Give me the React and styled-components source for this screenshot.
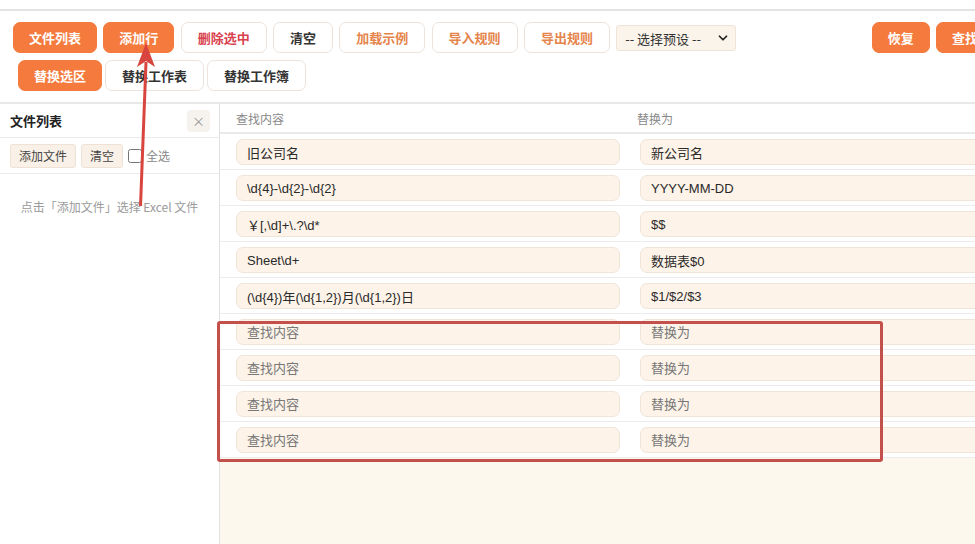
import styled, { createGlobalStyle } from "styled-components";
import { ChevronDown } from "lucide-react";

const GlobalStyle = createGlobalStyle`
  html, body {
    margin: 0;
    padding: 0;
    background: #fff;
    overflow: hidden;
    font-family: "Noto Sans CJK SC", "Noto Sans", sans-serif;
  }
`;

const Page = styled.div`
  position: relative;
  width: 1040px;
  height: 544px;
  display: flex;
  flex-direction: column;
  padding-top: 9px;
  box-sizing: border-box;
`;

const Toolbar = styled.div`
  border-top: 2px solid #e4e4e4;
  border-bottom: 2px solid #e8e8e8;
  padding: 11px 20px 11px 13px;
  display: flex;
  flex-direction: column;
  gap: 7px;
`;

const ToolRow = styled.div`
  display: flex;
  align-items: center;
  gap: 6.3px;
`;

const TabGroup = styled.div`
  display: flex;
  gap: 3px;
  margin-left: 5px;
`;

const Spacer = styled.div`
  flex: 1;
`;

const colors = {
  primary: "#fff",
  danger: "#d8434f",
  accent: "#e5854c",
  plain: "#333",
};

const Button = styled.button`
  height: 31px;
  padding: 0 ${(p) => (p.$kind === "primary" ? 15 : 16)}px;
  border-radius: 7px;
  font-family: "Noto Sans CJK SC", sans-serif;
  font-size: 13px;
  font-weight: 700;
  white-space: nowrap;
  cursor: pointer;
  border: 1px solid ${(p) => (p.$kind === "primary" ? "#f47b3d" : "#ece3dc")};
  background: ${(p) => (p.$kind === "primary" ? "#f47b3d" : "#fff")};
  color: ${(p) => colors[p.$kind || "plain"]};
`;

const SelectWrap = styled.div`
  position: relative;
  width: 120px;
  height: 26px;
`;

const Select = styled.select`
  appearance: none;
  width: 100%;
  height: 100%;
  border: 1px solid #efe4d6;
  border-radius: 3px;
  background: #fbf4ea;
  padding: 0 8px;
  font-family: "Noto Sans CJK SC", sans-serif;
  font-size: 13px;
  color: #333;
`;

const Chevron = styled(ChevronDown)`
  position: absolute;
  right: 6px;
  top: 6px;
  pointer-events: none;
`;

const Body = styled.div`
  flex: 1;
  display: flex;
  min-height: 0;
`;

const Sidebar = styled.aside`
  width: 219px;
  border-right: 1px solid #e2e2e2;
  display: flex;
  flex-direction: column;
`;

const SideHeader = styled.div`
  height: 33px;
  padding: 0 9px 0 10px;
  display: flex;
  align-items: center;
  justify-content: space-between;
  border-bottom: 1px solid #ebebeb;
  font-size: 13px;
  font-weight: 700;
  color: #222;
`;

const CloseBtn = styled.span`
  width: 23px;
  height: 22px;
  border-radius: 4px;
  background: #f6f2ee;
  color: #999;
  font-size: 13px;
  font-weight: 400;
  display: flex;
  align-items: center;
  justify-content: center;
`;

const SideTools = styled.div`
  height: 35px;
  padding: 0 10px;
  display: flex;
  align-items: center;
  gap: 5px;
  border-bottom: 1px solid #ebebeb;
  font-size: 12px;
  color: #888;
`;

const SmallButton = styled.button`
  height: 24px;
  padding: 0 8px;
  border: 1px solid #efe2d4;
  border-radius: 3px;
  background: #f9f1e7;
  font-family: "Noto Sans CJK SC", sans-serif;
  font-size: 12px;
  color: #444;
`;

const Check = styled.label`
  display: flex;
  align-items: center;
  gap: 4px;

  input {
    width: 14px;
    height: 14px;
    margin: 0;
  }
`;

const Empty = styled.p`
  margin: 24px 0 0;
  text-align: center;
  font-size: 12px;
  color: #9a9a9a;
`;

const Main = styled.main`
  flex: 1;
  background: #fdf8ee;
  display: flex;
  flex-direction: column;
`;

const Grid = styled.div`
  display: grid;
  grid-template-columns: 1fr 1fr;
  column-gap: 20px;
  padding: 0 16px;
  background: #fff;
`;

const HeadRow = styled(Grid)`
  height: 28px;
  align-items: center;
  border-bottom: 2px solid #eaeaea;
  font-size: 12px;
  color: #888;

  span + span {
    margin-left: -3px;
  }
`;

const Row = styled(Grid)`
  padding-top: 5px;
  padding-bottom: 4px;
  border-bottom: 1px solid #ececec;
`;

const Field = styled.input`
  height: 26px;
  box-sizing: border-box;
  width: 100%;
  border: 1px solid #efe4d8;
  border-radius: 7px;
  background: #fdf3e8;
  padding: 0 10px;
  font-family: "Liberation Sans", "Noto Sans CJK SC", sans-serif;
  font-size: 13px;
  color: #2a2a2a;

  &::placeholder {
    color: #777;
  }
`;

const Callout = styled.div`
  position: absolute;
  left: 217px;
  top: 321px;
  width: 666px;
  height: 141px;
  box-sizing: border-box;
  border: 3px solid #c4504b;
  border-radius: 3px;
  pointer-events: none;
`;

const Arrow = styled.svg`
  position: absolute;
  left: 0;
  top: 0;
  pointer-events: none;
`;

const rules = [
  ["旧公司名", "新公司名"],
  ["\\d{4}-\\d{2}-\\d{2}", "YYYY-MM-DD"],
  ["￥[,\\d]+\\.?\\d*", "$$"],
  ["Sheet\\d+", "数据表$0"],
  ["(\\d{4})年(\\d{1,2})月(\\d{1,2})日", "$1/$2/$3"],
  ["", ""],
  ["", ""],
  ["", ""],
  ["", ""],
];

export default function App() {
  return (
    <Page>
      <GlobalStyle />
      <Toolbar>
        <ToolRow>
          <Button $kind="primary">文件列表</Button>
          <Button $kind="primary">添加行</Button>
          <Button $kind="danger">删除选中</Button>
          <Button>清空</Button>
          <Button $kind="accent">加载示例</Button>
          <Button $kind="accent">导入规则</Button>
          <Button $kind="accent">导出规则</Button>
          <SelectWrap>
            <Select defaultValue="">
              <option value="">-- 选择预设 --</option>
            </Select>
            <Chevron size={14} strokeWidth={3} color="#222" />
          </SelectWrap>
          <Spacer />
          <Button $kind="primary">恢复</Button>
          <Button $kind="primary">查找替换</Button>
        </ToolRow>
        <ToolRow>
          <TabGroup>
            <Button $kind="primary">替换选区</Button>
            <Button>替换工作表</Button>
            <Button>替换工作簿</Button>
          </TabGroup>
        </ToolRow>
      </Toolbar>

      <Body>
        <Sidebar>
          <SideHeader>
            文件列表
            <CloseBtn>×</CloseBtn>
          </SideHeader>
          <SideTools>
            <SmallButton>添加文件</SmallButton>
            <SmallButton>清空</SmallButton>
            <Check>
              <input type="checkbox" />
              全选
            </Check>
          </SideTools>
          <Empty>点击「添加文件」选择 Excel 文件</Empty>
        </Sidebar>

        <Main>
          <HeadRow>
            <span>查找内容</span>
            <span>替换为</span>
          </HeadRow>
          {rules.map(([find, repl], i) => (
            <Row key={i}>
              <Field defaultValue={find} placeholder="查找内容" />
              <Field defaultValue={repl} placeholder="替换为" />
            </Row>
          ))}
        </Main>
      </Body>

      <Callout />
      <Arrow width="300" height="260" viewBox="0 0 300 260">
        <path d="M139 206 L144.5 62 L147.5 62 L142 206 Z" fill="#d8443e" />
        <path d="M146 43 L155 67 L146 61 L137 67 Z" fill="#d8443e" />
      </Arrow>
    </Page>
  );
}
